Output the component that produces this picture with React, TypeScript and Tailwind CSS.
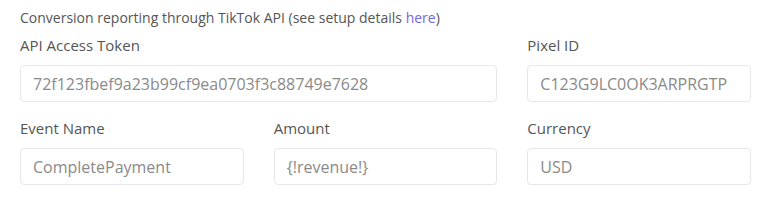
import React from 'react';

const fields = [
  { label: 'API Access Token', value: '72f123fbef9a23b99cf9ea0703f3c88749e7628', span: 'col-span-2' },
  { label: 'Pixel ID', value: 'C123G9LC0OK3ARPRGTP', span: '' },
  { label: 'Event Name', value: 'CompletePayment', span: '' },
  { label: 'Amount', value: '{!revenue!}', span: '' },
  { label: 'Currency', value: 'USD', span: '' },
];

export default function App() {
  return (
    <div className="h-[203px] w-[763px] bg-white pl-5 pr-3 pt-[7px] text-[#555]" style={{ fontFamily: '"Open Sans", sans-serif' }}>
      <p className="text-[14px] leading-[22px]">
        Conversion reporting through TikTok API (see setup details{' '}
        <a className="text-[#7468de]">here</a>)
      </p>
      <div className="mt-[5px] grid grid-cols-3 gap-x-[30px]">
        {fields.map((f) => (
          <div key={f.label} className={`${f.span} mb-[15px]`}>
            <label className="block text-[15px] leading-[22px]">{f.label}</label>
            <div className="mt-[9px] flex h-[37px] items-center rounded-[4px] border border-[#e8e8e8] px-3 text-[16px] text-[#8a8a8a]">
              {f.value}
            </div>
          </div>
        ))}
      </div>
    </div>
  );
}
